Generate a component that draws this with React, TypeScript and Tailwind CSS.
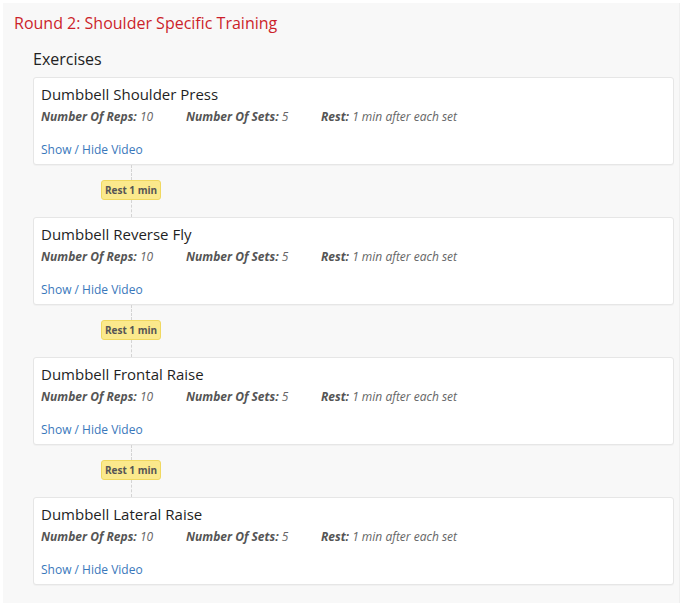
const exercises = [
  "Dumbbell Shoulder Press",
  "Dumbbell Reverse Fly",
  "Dumbbell Frontal Raise",
  "Dumbbell Lateral Raise",
];

function Stat({ label, value, width }: { label: string; value: string; width: string }) {
  return (
    <span className={`${width} shrink-0 italic`}>
      <b className="font-bold text-[#555]">{label}:</b>{" "}
      <span className="text-[#666]">{value}</span>
    </span>
  );
}

function ExerciseCard({ name }: { name: string }) {
  return (
    <div className="h-[88px] rounded-[3px] border border-[#e6e6e6] bg-white pl-[7px] pr-2 pt-[6px] shadow-[0_1px_1px_rgba(0,0,0,0.03)]">
      <h3 className="text-[15px] leading-[20px] text-[#1f1f1f]">{name}</h3>
      <div className="mt-[3px] flex text-[12px] leading-[20px]">
        <Stat label="Number Of Reps" value="10" width="w-[145px]" />
        <Stat label="Number Of Sets" value="5" width="w-[135px]" />
        <Stat label="Rest" value="1 min after each set" width="" />
      </div>
      <a href="#" className="mt-[13px] block text-[12px] leading-[20px] text-[#3a78bb]">
        Show / Hide Video
      </a>
    </div>
  );
}

function RestConnector() {
  return (
    <div className="flex h-[52px] w-[196px] flex-col items-center">
      <div className="h-[15px] border-l border-dashed border-[#d4d4d4]" />
      <span className="flex h-[20px] w-[60px] items-center justify-center rounded-[3px] border border-[#f0d860] bg-[#fbe98c] text-[10px] font-bold text-[#555]">
        Rest 1 min
      </span>
      <div className="h-[17px] border-l border-dashed border-[#d4d4d4]" />
    </div>
  );
}

export default function App() {
  return (
    <div
      className="h-[603px] w-[693px] overflow-hidden bg-white pt-[3px] pl-[3px]"
      style={{ fontFamily: '"Open Sans", "Noto Sans", sans-serif' }}
    >
      <div className="h-full w-[677px] border-r border-[#efefef] bg-[#f8f8f8] pl-[11px] pr-[5px]">
        <h2 className="pt-[10px] text-[16px] leading-[20px] text-[#cc1f2b]">
          Round 2: Shoulder Specific Training
        </h2>
        <div className="pl-[19px] pt-[15px]">
          <h4 className="text-[16px] leading-[22px] text-[#222]">Exercises</h4>
          <div className="mt-[7px] flex flex-col">
            {exercises.map((name, i) => (
              <div key={name}>
                <ExerciseCard name={name} />
                {i < exercises.length - 1 ? <RestConnector /> : null}
              </div>
            ))}
          </div>
        </div>
      </div>
    </div>
  );
}
